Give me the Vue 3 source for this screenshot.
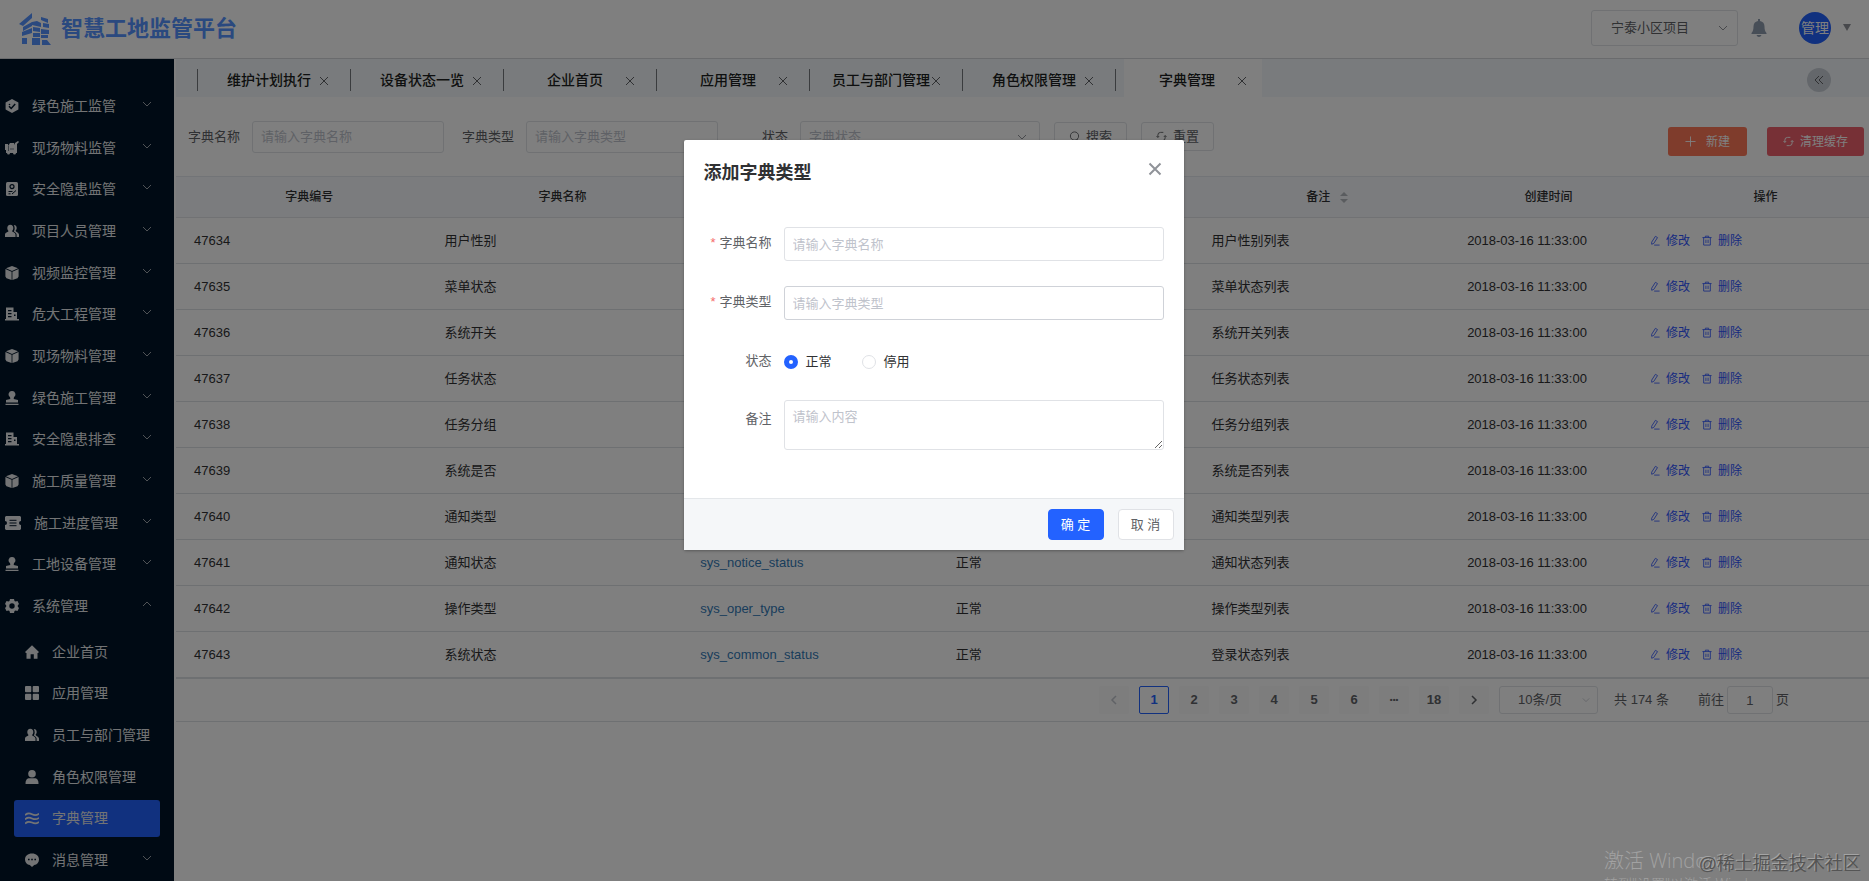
<script setup>
import { ref } from 'vue'

const menu = [
  { name: '绿色施工监管', icon: 'hex' },
  { name: '现场物料监管', icon: 'cart' },
  { name: '安全隐患监管', icon: 'doc' },
  { name: '项目人员管理', icon: 'users' },
  { name: '视频监控管理', icon: 'cube' },
  { name: '危大工程管理', icon: 'building' },
  { name: '现场物料管理', icon: 'cube' },
  { name: '绿色施工管理', icon: 'stamp' },
  { name: '安全隐患排查', icon: 'building' },
  { name: '施工质量管理', icon: 'cube' },
  { name: '施工进度管理', icon: 'ticket', wide: true },
  { name: '工地设备管理', icon: 'stamp' },
  { name: '系统管理', icon: 'gear', open: true }
]
const submenu = [
  { name: '企业首页', icon: 'home' },
  { name: '应用管理', icon: 'grid' },
  { name: '员工与部门管理', icon: 'users' },
  { name: '角色权限管理', icon: 'user' },
  { name: '字典管理', icon: 'waves', active: true },
  { name: '消息管理', icon: 'chat', more: true }
]
const icons = {
  hex: '<path d="M7 0l6.400 3.500v7L7 14 .6 10.500v-7z"/><path d="M4 7.200l2.200 2.300L10.200 5" fill="none" stroke="#001529" stroke-width="1.500"/><circle cx="4.500" cy="5.500" r=".8" fill="#001529"/>',
  cart: '<path d="M0 3h3v2L5 2h4l1 2V2l3-2 1 1-2 2v9h-1a1.500 1.500 0 0 1-3 0H5a1.500 1.500 0 0 1-3 0H1V9H0z"/><path d="M3.500 5v5M5 8h4" stroke="#001529" fill="none" stroke-width=".5"/>',
  doc: '<rect x="1" width="12" height="14" rx="1.500"/><circle cx="7" cy="4.600" r="2" fill="none" stroke="#001529" stroke-width="1.200"/><path d="M3.500 9.500h4M7 12l4-3.500M3.500 11.800h2" fill="none" stroke="#001529" stroke-width="1"/>',
  users: '<path d="M5.300.8c2 0 3 1.400 3 3.300 0 1.300-.5 2.400-1.300 3 .2 1 3.200 1.300 3.500 3.400V13H0v-2.500C.3 8.400 3.400 8.100 3.600 7.100c-.8-.6-1.300-1.700-1.300-3 0-1.900 1-3.300 3-3.300z"/><path d="M8.800 1c1.800 0 2.900 1.300 2.900 3 0 1.200-.5 2.200-1.200 2.800.2 1 3 1.500 3.500 3.600V13h-2.400v-2.600c-.3-1.500-1.600-2.300-2.800-3 .6-1 .9-2 .9-3.200S9.300 2 8.800 1z"/>',
  cube: '<path d="M7 0l6 2.200L7 4.900 1 2.200zM.4 3l6.200 2.700V14L1.500 12.300.4 10.500zM13.600 3L7.400 5.700V14l5.100-1.700 1.100-1.800z"/>',
  building: '<path d="M1 12V.5h7.500V5H12v7h2v1.500H0V12zM3 3v1.200h3.500V3zm0 3v1.200h3.500V6zm0 3v1.200h3.500V9zm6-1.500V9h1.500V7.500z" fill-rule="evenodd"/>',
  stamp: '<path d="M7 0a3.300 3.300 0 0 1 2 6l-.3 2L13 9v2.500H1V9l4.300-1L5 6a3.300 3.300 0 0 1 2-6zM.5 12.700h13V14H.5z"/>',
  ticket: '<path d="M1 0h14l1 1v4a2 2 0 0 0 0 4v4l-1 1H1l-1-1V9a2 2 0 0 0 0-4V1z"/><path d="M4.500 4.300h7M4.500 7h7M4.500 9.700h7" stroke="#001529" stroke-width="1"/>',
  gear: '<path d="M5 0h4l.5 2 1 .6 2-.6 1.500 3-1.200 1.300v1.400L14 9l-1.500 3-2-.6-1 .6L9 14H5l-.5-2-1-.6-2 .6L0 9l1.200-1.300V6.300L0 5l1.500-3 2 .6 1-.6zM7 4.300a2.700 2.700 0 1 0 0 5.400 2.700 2.700 0 0 0 0-5.400z" fill-rule="evenodd"/>',
  home: '<path d="M7 .3L14 7l-1 1h-.5v5.700H8.800V9.200H5.600v4.500H1.500V8H1L0 7z"/>',
  grid: '<rect width="6.300" height="6.300" rx="1"/><rect x="7.700" width="6.300" height="6.300" rx="1"/><rect y="7.700" width="6.300" height="6.300" rx="1"/><rect x="7.700" y="7.700" width="6.300" height="6.300" rx="1"/>',
  user: '<circle cx="7" cy="3.800" r="3.800"/><path d="M.5 14c0-4 1.500-5.700 4-5.700h5c2.500 0 4 1.700 4 5.700z"/>',
  waves: '<path d="M0 4.200C2.500 1.500 4.500 2 7 3.200s4.500 1.500 7-.6M0 8.400c2.500-2.700 4.500-2.200 7-1s4.500 1.500 7-.6M0 12.600c2.500-2.700 4.500-2.200 7-1s4.500 1.500 7-.6" fill="none" stroke="currentColor" stroke-width="1.700"/>',
  chat: '<path d="M7 .5c4.200 0 7 2.500 7 6 0 3-2 5-4.800 5.600L7 14l-2.200-1.900C2 11.500 0 9.500 0 6.500c0-3.500 2.800-6 7-6z"/><path d="M3 6.500h1.600M6.200 6.500h1.600M9.400 6.500H11" stroke="#001529" stroke-width="1.500"/>'
}

const tabs = ['维护计划执行', '设备状态一览', '企业首页', '应用管理', '员工与部门管理', '角色权限管理', '字典管理']
const activeTab = '字典管理'

const rows = [
  { id: 47634, name: '用户性别', note: '用户性别列表' },
  { id: 47635, name: '菜单状态', note: '菜单状态列表' },
  { id: 47636, name: '系统开关', note: '系统开关列表' },
  { id: 47637, name: '任务状态', note: '任务状态列表' },
  { id: 47638, name: '任务分组', note: '任务分组列表' },
  { id: 47639, name: '系统是否', note: '系统是否列表' },
  { id: 47640, name: '通知类型', note: '通知类型列表' },
  { id: 47641, name: '通知状态', note: '通知状态列表', type: 'sys_notice_status', state: '正常' },
  { id: 47642, name: '操作类型', note: '操作类型列表', type: 'sys_oper_type', state: '正常' },
  { id: 47643, name: '系统状态', note: '登录状态列表', type: 'sys_common_status', state: '正常' }
]
const pages = ['1', '2', '3', '4', '5', '6', '•••', '18']
const status = ref('0')
const jump = ref('1')
</script>

<template>
  <div class="app">
    <header class="topbar">
      <div class="brand">
        <svg class="brand-mark" viewBox="0 0 32 32" aria-hidden="true">
          <path d="M0 11L13 0v5L4 13zM4 14l9-5v4l-9 5zM3 19l10-4v5L3 23zM3 25h5v6H3zM13 9l5-1 4 2v4l-9-2zM14 14l7 1v4l-7-1zM14 20h7v4h-7zM13 25h8v7h-8zM22 4l7 2v4l-7-3zM24 10l6 1v4l-6-1zM22 16l8 1v4h-8zM22 22h7v3h-7zM23 27h5l4 5h-9z" />
        </svg>
        <span class="brand-name">智慧工地监管平台</span>
      </div>
      <div class="top-tools">
        <div class="select-box project">
          <select aria-label="项目"><option>宁泰小区项目</option></select>
          <svg class="chev" viewBox="0 0 10 6"><path d="M1 1l4 4 4-4" /></svg>
        </div>
        <button class="bell" aria-label="通知">
          <svg viewBox="0 0 16 18"><path d="M7 0h2v2c3 .6 4.500 2.500 4.500 5.500 0 3 .5 5 2 6.500v1H.5v-1c1.500-1.500 2-3.500 2-6.500C2.500 4.500 4 2.600 7 2zM5.500 16h5c-.5 1.300-1.300 2-2.500 2s-2-.7-2.500-2z" /></svg>
        </button>
        <button class="avatar">管理</button>
        <span class="caret"></span>
      </div>
    </header>

    <div class="body">
      <aside class="sidebar">
        <nav class="menu">
          <a v-for="m in menu" :key="m.name" href="#" class="item">
            <svg class="ico" :class="{ wide: m.wide }" :viewBox="m.wide ? '0 0 16 14' : '0 0 14 14'" v-html="icons[m.icon]"></svg>
            <span>{{ m.name }}</span>
            <svg class="chev side" :class="{ up: m.open }" viewBox="0 0 10 6"><path d="M1 1l4 4 4-4" /></svg>
          </a>
        </nav>
        <nav class="menu sub">
          <a v-for="m in submenu" :key="m.name" href="#" class="item" :class="{ active: m.active }">
            <svg class="ico" viewBox="0 0 14 14" v-html="icons[m.icon]"></svg>
            <span>{{ m.name }}</span>
            <svg v-if="m.more" class="chev side" viewBox="0 0 10 6"><path d="M1 1l4 4 4-4" /></svg>
          </a>
        </nav>
      </aside>

      <main class="main">
        <div class="tabs">
          <div v-for="t in tabs" :key="t" class="tab" :class="{ active: t === activeTab }">
            <span class="tab-name">{{ t }}</span>
            <button class="tab-close" :aria-label="'关闭' + t"><svg viewBox="0 0 10 10"><path d="M1 1l8 8M9 1L1 9" /></svg></button>
          </div>
          <button class="collapse" aria-label="收起"><svg viewBox="0 0 10 10"><path d="M5 1L1 5l4 4M9 1L5 5l4 4" /></svg></button>
        </div>

        <div class="filters">
          <label for="q-name">字典名称</label>
          <input id="q-name" class="q-name" placeholder="请输入字典名称" />
          <label for="q-type">字典类型</label>
          <input id="q-type" class="q-type" placeholder="请输入字典类型" />
          <label for="q-status" class="status-label">状态</label>
          <div class="select-box q-status">
            <select id="q-status"><option>字典状态</option></select>
            <svg class="chev" viewBox="0 0 10 6"><path d="M1 1l4 4 4-4" /></svg>
          </div>
          <button class="btn">
            <svg viewBox="0 0 12 12"><circle cx="6" cy="5.500" r="4.500" /><path d="M9 9l2.500 2.500" /></svg>搜索
          </button>
          <button class="btn">
            <svg viewBox="0 0 12 12"><path d="M2 7V4.500A3 3 0 0 1 5 1.500h3M10 5v2.500a3 3 0 0 1-3 3H4M.5 5.500L2 7l1.500-1.500M8.500 6.500L10 5l1.500 1.500" /></svg>重置
          </button>
          <div class="actions">
            <button class="solid orange"><svg viewBox="0 0 12 12"><path d="M6 .5v11M.5 6h11" /></svg>新建</button>
            <button class="solid red">
              <svg viewBox="0 0 12 12"><path d="M2 7V4.500A3 3 0 0 1 5 1.500h3M10 5v2.500a3 3 0 0 1-3 3H4M.5 5.500L2 7l1.500-1.500M8.500 6.500L10 5l1.500 1.500" /></svg>清理缓存
            </button>
          </div>
        </div>

        <table class="grid">
          <colgroup>
            <col class="c-id" /><col class="c-mid" /><col class="c-mid" /><col class="c-mid" /><col class="c-mid" /><col class="c-time" /><col />
          </colgroup>
          <thead>
            <tr>
              <th>字典编号</th><th>字典名称</th><th></th><th></th>
              <th class="note-head">备注<span class="sort"><i class="asc"></i><i class="desc"></i></span></th>
              <th>创建时间</th><th class="ops-head">操作</th>
            </tr>
          </thead>
          <tbody>
            <tr v-for="r in rows" :key="r.id">
              <td>{{ r.id }}</td>
              <td>{{ r.name }}</td>
              <td><a v-if="r.type" href="#" class="type">{{ r.type }}</a></td>
              <td>{{ r.state }}</td>
              <td>{{ r.note }}</td>
              <td>2018-03-16 11:33:00</td>
              <td>
                <div class="ops">
                  <button><svg viewBox="0 0 12 12"><path d="M2 8l4.500-7 2.500 1.500-4.500 7L2 10.500zM5 11.500h6.500" /></svg>修改</button>
                  <button><svg viewBox="0 0 12 12"><path d="M.5 2.500h11M4 2.500V.8h4v1.700M2 2.500v9h8v-9M4.700 5v4M7.300 5v4" /></svg>删除</button>
                </div>
              </td>
            </tr>
          </tbody>
        </table>

        <div class="pager">
          <button class="page prev" aria-label="上一页"><svg viewBox="0 0 8 10"><path d="M6 1L2 5l4 4" /></svg></button>
          <button v-for="p in pages" :key="p" class="page" :class="{ current: p === '1', dots: p === '•••' }">{{ p }}</button>
          <button class="page" aria-label="下一页"><svg viewBox="0 0 8 10"><path d="M2 1l4 4-4 4" /></svg></button>
          <div class="select-box size">
            <select aria-label="每页条数"><option>10条/页</option></select>
            <svg class="chev" viewBox="0 0 10 6"><path d="M1 1l4 4 4-4" /></svg>
          </div>
          <span class="total">共 174 条</span>
          <label class="jump">前往<input v-model="jump" />页</label>
        </div>
      </main>
    </div>

    <div class="mask"></div>

    <section class="dialog" role="dialog" aria-label="添加字典类型">
      <div class="dialog-head">
        <h2>添加字典类型</h2>
        <button class="dialog-close" aria-label="关闭"><svg viewBox="0 0 14 14"><path d="M1.500 1.500l11 11M12.500 1.500l-11 11" /></svg></button>
      </div>
      <div class="form">
        <div class="row">
          <label for="f-name" class="required">字典名称</label>
          <input id="f-name" placeholder="请输入字典名称" />
        </div>
        <div class="row">
          <label for="f-type" class="required">字典类型</label>
          <input id="f-type" class="hovered" placeholder="请输入字典类型" />
        </div>
        <div class="row status-row">
          <span class="row-label">状态</span>
          <div class="radios">
            <label><input v-model="status" type="radio" name="status" value="0" />正常</label>
            <label><input v-model="status" type="radio" name="status" value="1" />停用</label>
          </div>
        </div>
        <div class="row note">
          <label for="f-note">备注</label>
          <textarea id="f-note" placeholder="请输入内容"></textarea>
        </div>
      </div>
      <div class="dialog-foot">
        <button class="primary">确 定</button>
        <button>取 消</button>
      </div>
    </section>

    <div class="activate">
      <p class="big">激活 Windows</p>
      <p>转到"设置"以激活 Windows。</p>
    </div>
    <div class="credit">@稀土掘金技术社区</div>
  </div>
</template>

<style>
body {
  margin: 0;
}
</style>

<style scoped>
* {
  box-sizing: border-box;
}
.app {
  position: relative;
  display: flex;
  flex-direction: column;
  height: 100vh;
  overflow: hidden;
  background: #fff;
  color: #303133;
  font: 13px/20px "Liberation Sans", "Noto Sans CJK SC", sans-serif;
}
button,
input,
select,
textarea {
  margin: 0;
  font: inherit;
  color: inherit;
}
button {
  padding: 0;
  border: 0;
  background: none;
}
a {
  color: inherit;
  text-decoration: none;
}
svg {
  flex: none;
  display: block;
}
input,
textarea {
  border: 1px solid #e0e2e6;
  border-radius: 3px;
  background: #fff;
  padding: 0 8px;
  outline: 0;
}
input::placeholder,
textarea::placeholder {
  color: #bfc3cc;
}
.chev {
  width: 10px;
  height: 6px;
  fill: none;
  stroke: #909399;
}
.select-box {
  display: flex;
  align-items: center;
  border: 1px solid #e0e2e6;
  border-radius: 3px;
}
.select-box select {
  flex: 1;
  min-width: 0;
  height: 100%;
  appearance: none;
  border: 0;
  background: none;
  outline: 0;
}

.topbar {
  flex: none;
  display: flex;
  justify-content: space-between;
  height: 59px;
  border-bottom: 1px solid #d4d6da;
}
.brand {
  display: flex;
  align-items: center;
  gap: 10px;
  padding: 0 0 1px 19px;
  color: #5492ff;
}
.brand-mark {
  width: 32px;
  height: 32px;
  fill: currentColor;
}
.brand-name {
  font-size: 22px;
  line-height: 32px;
  font-weight: 700;
}
.top-tools {
  display: flex;
  align-items: center;
  padding: 0 18px 3px 0;
}
.project {
  width: 147px;
  height: 36px;
  padding: 0 9px 0 19px;
  color: #606266;
}
.bell {
  margin-left: 13px;
}
.bell svg {
  width: 16px;
  height: 18px;
  fill: #8f9cae;
}
.avatar {
  width: 32px;
  height: 32px;
  margin: 0 12px 0 32px;
  border-radius: 50%;
  background: #2362ff;
  color: #fff;
  font-size: 14px;
}
.caret {
  border: 4px solid transparent;
  border-top: 7px solid #909399;
  border-bottom: 0;
}

.body {
  flex: 1;
  display: flex;
  min-height: 0;
}
.sidebar {
  flex: none;
  display: flex;
  flex-direction: column;
  gap: 4px;
  width: 174px;
  padding-top: 26px;
  background: #001529;
  color: #e6e8ea;
  font-size: 14px;
}
.menu {
  display: grid;
  grid-auto-rows: 1fr;
  height: 542px;
}
.menu.sub {
  height: 250px;
}
.item {
  display: flex;
  align-items: center;
  gap: 13px;
  padding: 0 22px 0 5px;
}
.sub .item {
  margin: 2px 14px;
  padding: 0 8px 0 11px;
  border-radius: 3px;
}
.sub .item.active {
  background: #2362ff;
}
.ico {
  width: 14px;
  height: 14px;
  fill: currentColor;
}
.ico.wide {
  width: 16px;
}
.chev.side {
  margin: 0 0 4px auto;
  stroke: #a0a6ac;
}
.chev.up {
  transform: rotate(180deg);
}

.main {
  flex: 1;
  min-width: 0;
  margin-left: 2px;
}
.tabs {
  display: flex;
  align-items: center;
  height: 38px;
  padding: 4px 38px 0 21px;
  background: #f3f7fa;
}
.tab {
  position: relative;
  display: grid;
  grid-template-columns: 142px;
  align-items: center;
  justify-items: center;
  flex: none;
  width: 153px;
  height: 22px;
  border-left: 1px solid #75787c;
  color: #1c1e20;
  font-size: 14px;
  font-weight: 500;
}
.tab.active::before {
  content: "";
  position: absolute;
  inset: -10px 6px -6px 8px;
  background: #fff;
}
.tab-name {
  position: relative;
}
.tab-close {
  position: absolute;
  right: 21px;
  top: 7px;
}
.tab-close svg,
.collapse svg {
  width: 10px;
  height: 10px;
  fill: none;
  stroke: #606266;
}
.collapse {
  display: grid;
  place-items: center;
  width: 24px;
  height: 24px;
  margin-left: auto;
  border-radius: 50%;
  background: #c8ced6;
}

.filters {
  display: flex;
  align-items: center;
  height: 79px;
  padding: 0 5px 0 12px;
  color: #606266;
}
.filters input,
.q-status {
  height: 32px;
  margin-left: 12px;
}
.q-name,
.q-type {
  width: 192px;
  margin-right: 18px;
}
.q-type {
  margin-right: 44px;
}
.q-status {
  width: 240px;
  margin-right: 14px;
  padding: 0 12px 0 8px;
  color: #bfc3cc;
}
.btn {
  display: flex;
  align-items: center;
  justify-content: center;
  gap: 6px;
  width: 73px;
  height: 29px;
  margin-right: 14px;
  border: 1px solid #e0e2e6;
  border-radius: 3px;
}
.btn svg,
.solid svg {
  width: 11px;
  height: 11px;
  fill: none;
  stroke: currentColor;
}
.actions {
  display: flex;
  gap: 20px;
  margin-left: auto;
  padding-top: 10px;
}
.solid {
  display: flex;
  align-items: center;
  justify-content: center;
  gap: 6px;
  width: 97px;
  height: 29px;
  border-radius: 3px;
  color: #fff;
  font-size: 12px;
}
.orange {
  gap: 10px;
  width: 79px;
  background: #ff7858;
}
.red {
  background: #ee606c;
}

.grid {
  width: 100%;
  table-layout: fixed;
  border-collapse: separate;
  border-spacing: 0;
  border-top: 1px solid #e4e9ee;
}
.c-id {
  width: 14.8%;
}
.c-mid {
  width: 15.1%;
}
.c-time {
  width: 10.8%;
}
th {
  height: 41px;
  padding: 0 2px 0 18px;
  border-bottom: 1px solid #e2e5e9;
  background: #f6f9fc;
  font-size: 12px;
  font-weight: 500;
}
th.note-head {
  padding: 0 2px 0 14px;
}
th.ops-head {
  padding: 0 0 0 30px;
}
.sort {
  display: inline-grid;
  gap: 3px;
  margin-left: 10px;
  vertical-align: middle;
}
.sort i {
  border: 4px solid transparent;
}
.sort .asc {
  border-top: 0;
  border-bottom-color: #b4b8be;
}
.sort .desc {
  border-bottom: 0;
  border-top-color: #b4b8be;
}
td {
  height: 46px;
  padding: 0 0 0 18px;
  border-bottom: 1px solid #dde0e5;
}
.type {
  color: #337ab7;
}
.ops {
  display: flex;
  gap: 12px;
}
.ops button {
  display: flex;
  align-items: center;
  gap: 6px;
  color: #2f55ff;
  font-size: 12px;
}
.ops svg {
  width: 10px;
  height: 11px;
  fill: none;
  stroke: currentColor;
}

.pager {
  display: flex;
  align-items: center;
  justify-content: flex-end;
  height: 44px;
  padding: 0 80px 0 0;
  border-top: 1px solid #dde0e5;
  border-bottom: 1px solid #dde0e5;
  color: #606266;
}
.page {
  display: grid;
  place-items: center;
  width: 30px;
  height: 28px;
  margin-right: 10px;
  border-radius: 2px;
  background: #fafafb;
  font-weight: 700;
}
.page svg {
  width: 8px;
  height: 10px;
  fill: none;
  stroke: currentColor;
  stroke-width: 1.5;
}
.page.prev {
  color: #c0c4cc;
}
.page.current {
  border: 1px solid #2362ff;
  background: #fff;
  color: #2362ff;
}
.page.dots {
  font-size: 8px;
}
.size {
  width: 99px;
  height: 28px;
  margin-right: 16px;
  padding: 0 7px 0 18px;
}
.size .chev {
  width: 8px;
  stroke: #c0c4cc;
}
.total {
  margin-right: 29px;
}
.jump {
  display: flex;
  align-items: center;
  gap: 3px;
}
.jump input {
  width: 46px;
  height: 28px;
  text-align: center;
}

.mask {
  position: absolute;
  inset: 0;
  background: rgba(0, 0, 0, 0.5);
}
.dialog {
  position: absolute;
  top: 140px;
  left: calc(50% - 251px);
  width: 500px;
  border-radius: 2px;
  background: #fff;
  box-shadow: 0 1px 3px rgba(0, 0, 0, 0.3);
}
.dialog-head {
  display: flex;
  align-items: center;
  justify-content: space-between;
  padding: 21px 22px 0 20px;
}
h2 {
  margin: 0;
  font-size: 18px;
  line-height: 24px;
  font-weight: 700;
}
.dialog-close {
  margin-bottom: 8px;
}
.dialog-close svg {
  width: 14px;
  height: 14px;
  fill: none;
  stroke: #909399;
  stroke-width: 2;
}
.form {
  display: grid;
  gap: 25px;
  padding: 42px 20px 48px;
}
.row {
  display: flex;
  align-items: center;
  color: #606266;
}
.row > label,
.row-label {
  flex: none;
  width: 68px;
  margin-right: 12px;
  padding-bottom: 2px;
  text-align: right;
}
.required::before {
  content: "*";
  margin-right: 4px;
  color: #f56c6c;
}
.row > input {
  flex: 1;
  min-width: 0;
  height: 34px;
}
.row > input.hovered {
  border-color: #cfd2d8;
}
.status-row {
  height: 34px;
}
.radios {
  display: flex;
  gap: 30px;
  color: #303133;
}
.radios label {
  display: flex;
  align-items: center;
  gap: 8px;
}
.radios input {
  width: 14px;
  height: 14px;
  padding: 0;
  appearance: none;
  border-radius: 50%;
}
.radios input:checked {
  border: 5px solid #2362ff;
}
.note {
  align-items: flex-start;
  margin-top: -4px;
}
.note label {
  padding-top: 9px;
}
textarea {
  flex: 1;
  min-width: 0;
  height: 50px;
  padding: 6px 8px;
}
.dialog-foot {
  display: flex;
  justify-content: flex-end;
  gap: 14px;
  padding: 10px;
  border-top: 1px solid #e4e7ea;
  background: #f5f7f9;
}
.dialog-foot button {
  width: 56px;
  height: 31px;
  border: 1px solid #e0e2e6;
  border-radius: 4px;
  background: #fff;
  color: #606266;
}
.dialog-foot .primary {
  border-color: #2362ff;
  background: #2362ff;
  color: #fff;
}

.activate {
  position: absolute;
  left: calc(100% - 265px);
  top: calc(100% - 33px);
  color: #a2a2a2;
  font: 14px/20px "Open Sans", "Noto Sans CJK SC", sans-serif;
  font-weight: 300;
  white-space: nowrap;
}
.activate p {
  margin: 0;
}
.activate .big {
  font-size: 20px;
  line-height: 26px;
}
.credit {
  position: absolute;
  right: 8px;
  bottom: 4px;
  color: #555;
  font-size: 18px;
  line-height: 26px;
  text-shadow: -1px -1px 0 #a4a4a4;
}
</style>
